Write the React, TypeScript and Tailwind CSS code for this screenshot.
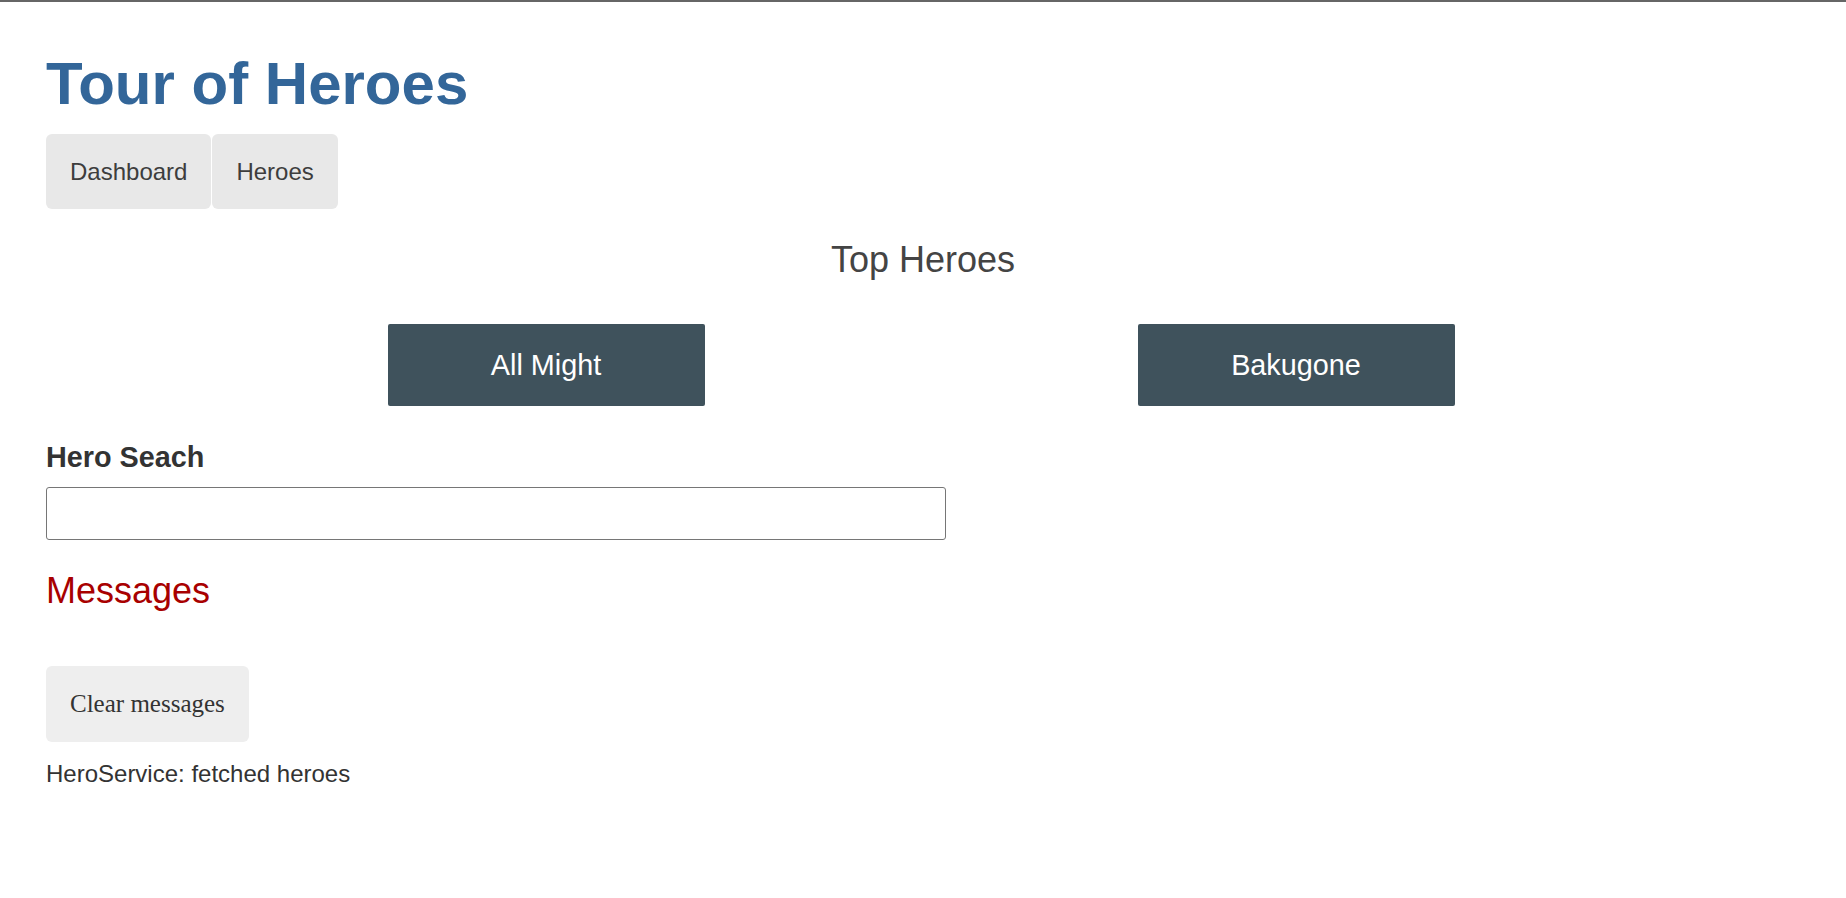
import React from "react";

const heroes = ["All Might", "Bakugone"];

export default function App() {
  return (
    <div className="min-h-[898px] bg-white" style={{ fontFamily: '"Liberation Sans", Arial, sans-serif' }}>
      <div className="h-[2px] bg-[#666666]" />
      <div className="px-[46px] pt-[47px]">
        <h1 className="text-[60px] leading-[69px] font-bold text-[#336699] m-0">Tour of Heroes</h1>
        <nav className="mt-[16px] flex">
          <a className="block bg-[#e8e8e8] text-[#3d3d3d] text-[24px] leading-[27px] px-6 py-6 rounded-[6px]">Dashboard</a>
          <a className="block ml-px bg-[#e8e8e8] text-[#3d3d3d] text-[24px] leading-[27px] px-6 py-6 rounded-[6px]">Heroes</a>
        </nav>
        <h2 className="mt-[30px] text-center text-[36px] leading-[41px] text-[#444444] font-normal">Top Heroes</h2>
        <div className="mt-[44px] ml-[125px] w-[1500px] flex justify-around">
          {heroes.map((h) => (
            <a key={h} className="block w-[317px] bg-[#3f525c] text-white text-center text-[28.8px] leading-[34px] py-6 rounded-[2px]">
              {h}
            </a>
          ))}
        </div>
        <label className="block mt-[35px] text-[28.8px] leading-[33px] font-bold text-[#333333]">Hero Seach</label>
        <input
          type="text"
          className="block mt-[13px] w-full max-w-[900px] h-[53px] border border-[#767676] rounded-[3px] px-3 outline-none"
        />
        <h2 className="mt-[30px] text-[36px] leading-[41px] text-[#a80000] font-normal">Messages</h2>
        <button
          className="mt-[55px] block bg-[#eeeeee] text-[#333333] text-[25px] leading-[28px] px-6 py-6 rounded-[6px]"
          style={{ fontFamily: '"Liberation Serif", "Times New Roman", serif' }}
        >
          Clear messages
        </button>
        <div className="mt-[18px] text-[24px] leading-[28px] text-[#333333]">HeroService: fetched heroes</div>
      </div>
    </div>
  );
}
